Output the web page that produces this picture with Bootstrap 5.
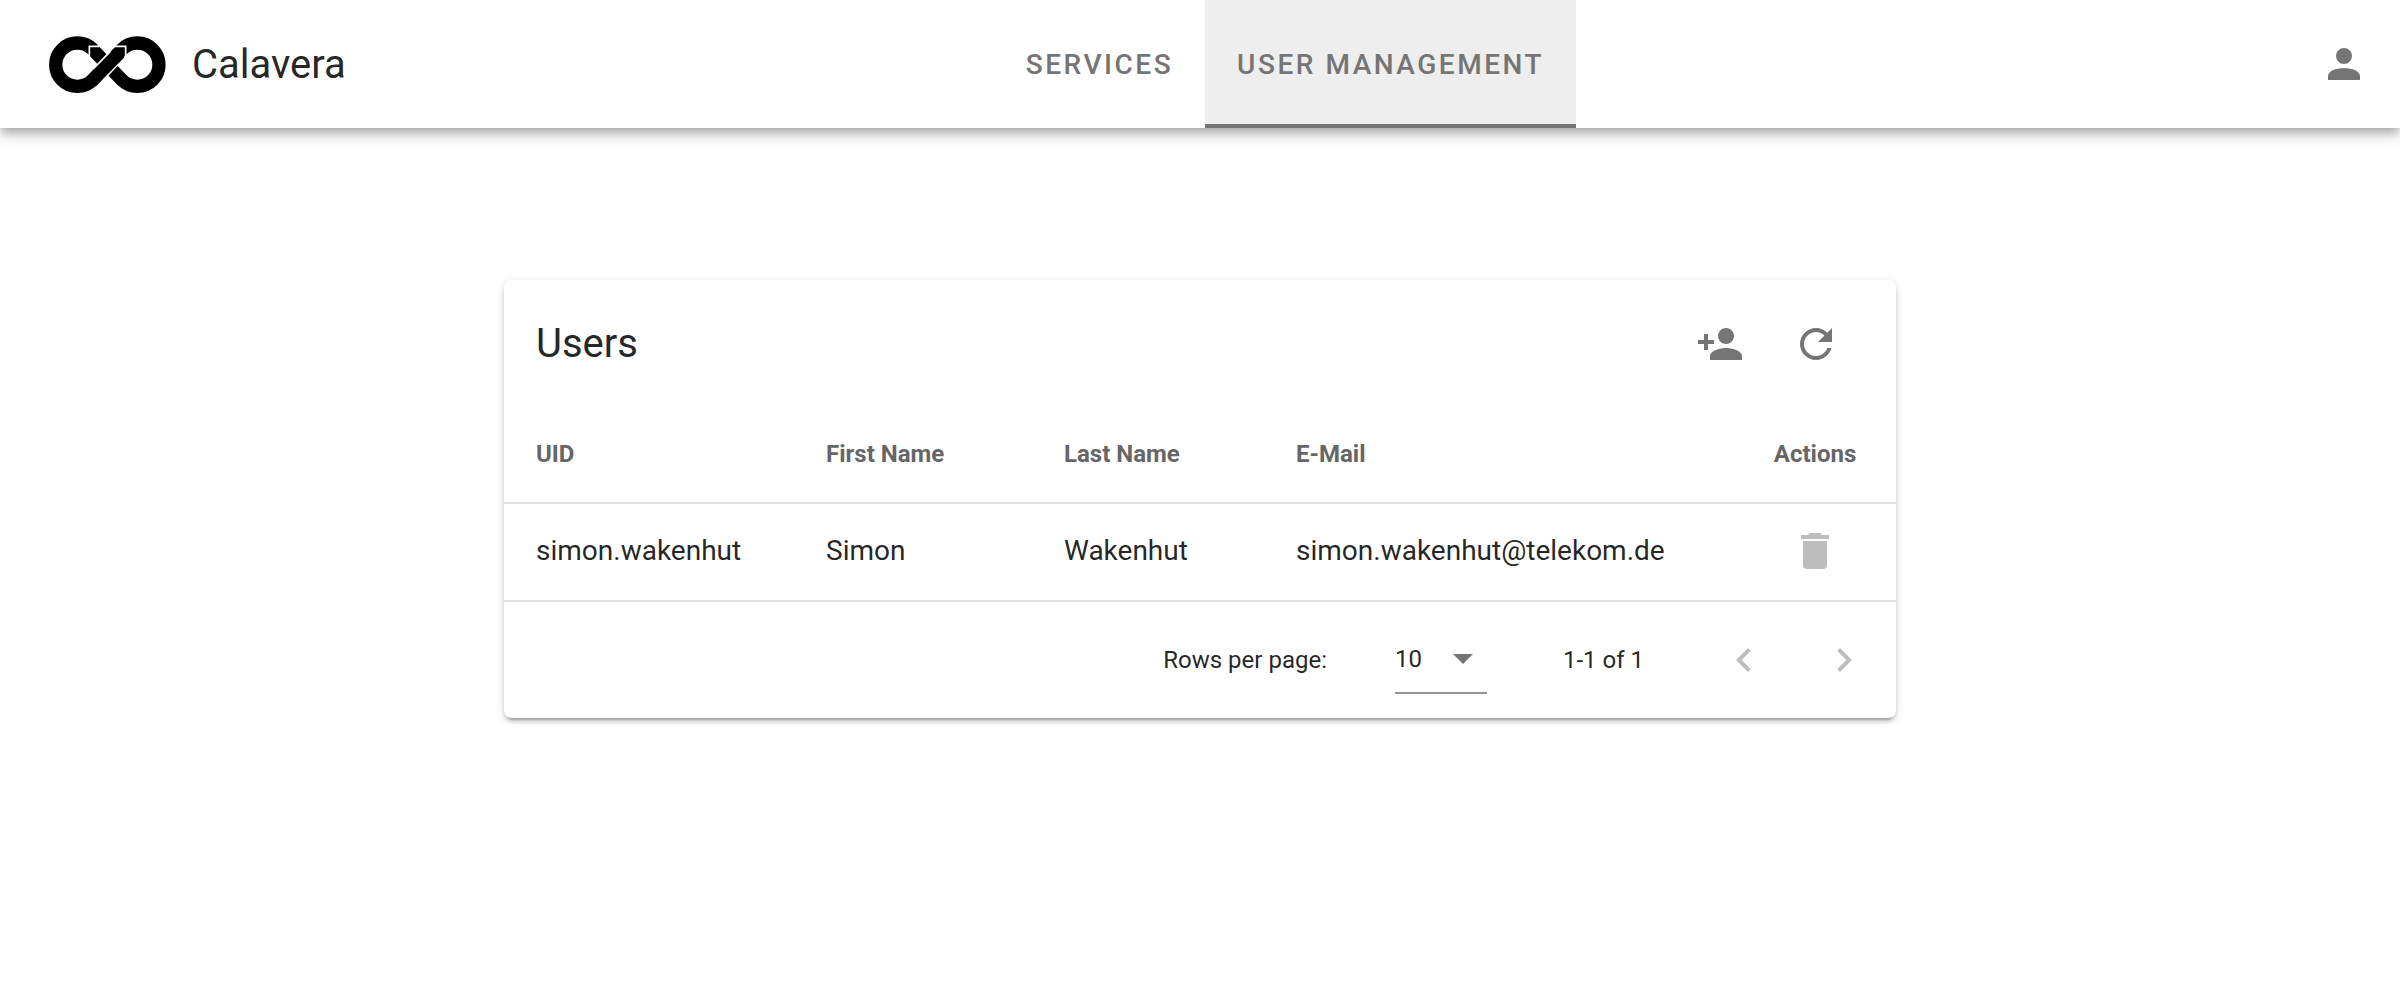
<!DOCTYPE html>
<html lang="en">
<head>
<meta charset="utf-8">
<meta name="viewport" content="width=device-width, initial-scale=1">
<title>Calavera</title>
<link href="https://cdn.jsdelivr.net/npm/bootstrap@5.3.0/dist/css/bootstrap.min.css" rel="stylesheet">
<style>
  body { font-family: Roboto, "Liberation Sans", sans-serif; color: rgba(0,0,0,.87); background: #fff; }
  .top-bar { height: 128px; padding: 0 20px 0 44px; box-shadow: 0 4px 8px -2px rgba(0,0,0,.2), 0 8px 10px rgba(0,0,0,.14), 0 2px 20px rgba(0,0,0,.12); }
  .brand-link { gap: 22px; padding-top: 2px; }
  .brand-name { font-size: 40px; line-height: 60px; color: inherit; }
  .account-area { padding-left: 84px; }
  .tab-link { font-size: 28px; font-weight: 500; letter-spacing: .09em; padding: 2px 32px 0; color: #757575; text-transform: uppercase; border-radius: 0; }
  .tab-link:hover { color: #616161; }
  .tab-link.active { background: #eee; color: #757575; box-shadow: inset 0 -4px #757575; }
  .tool-btn { width: 72px; height: 72px; padding: 0; border: 0; border-radius: 50%; color: #757575; display: inline-flex; align-items: center; justify-content: center; }
  .tool-btn:disabled { color: #bdbdbd; opacity: 1; border: 0; }
  .glyph { width: 48px; height: 48px; fill: currentColor; display: block; }
  .page-area { max-width: 1440px; padding: 152px 24px 24px; }
  .users-card { border: 0; border-radius: 8px; color: inherit; box-shadow: 0 6px 2px -4px rgba(0,0,0,.2), 0 4px 4px rgba(0,0,0,.14), 0 2px 10px rgba(0,0,0,.12); }
  .users-head { height: 128px; padding: 0 44px 0 32px; }
  .users-head h1 { font-size: 40px; font-weight: 400; line-height: 64px; }
  .users-table { --bs-table-color: rgba(0,0,0,.87); table-layout: fixed; border-collapse: separate; border-spacing: 0; }
  .users-table th, .users-table td { padding: 0 32px 2px; vertical-align: middle; border-bottom: 2px solid #e0e0e0; }
  .users-table th { height: 96px; font-size: 24px; font-weight: 700; --bs-table-color: #666; color: #666; }
  .users-table td { height: 98px; font-size: 28px; }
  .w-uid { width: 290px; } .w-first { width: 238px; } .w-last { width: 232px; } .w-act { width: 162px; }
  .pager { height: 116px; padding: 0 16px; font-size: 24px; }
  .rows-select { width: 92px; height: 68px; margin: 0 76px 0 68px; padding: 0; font-size: 24px; color: inherit; border: 0; border-bottom: 2px solid #949494; border-radius: 0; background: no-repeat right 14px center / 20px 10px url("data:image/svg+xml,%3Csvg xmlns='http://www.w3.org/2000/svg' viewBox='0 0 20 10'%3E%3Cpath fill='%23757575' d='M0 0h20L10 10z'/%3E%3C/svg%3E"); }
  .page-btns { gap: 28px; margin-left: 64px; }
</style>
<script src="https://cdn.jsdelivr.net/npm/bootstrap@5.3.0/dist/js/bootstrap.bundle.min.js"></script>
</head>
<body>
<header class="top-bar d-flex align-items-center justify-content-between">
  <a href="#" class="brand-link d-flex align-items-center text-decoration-none text-reset">
    <svg width="126" height="70" viewBox="0 0 378 210" fill="none" aria-hidden="true">
      <path stroke="#000" stroke-width="40" d="M146,150A65,65 0 1 1 146,58L234,150A65,65 0 1 0 234,58L146,150"/>
      <path stroke="#fff" stroke-width="49" d="M164,132L214,80"/>
      <path fill="#000" d="M128,140L212,55H240V83L156,168Z"/>
      <path stroke="#fff" stroke-width="5" d="M166,49H136V84M206,49H245V84"/>
    </svg>
    <span class="brand-name">Calavera</span>
  </a>
  <nav class="nav align-self-stretch" aria-label="Main">
    <a class="nav-link tab-link d-flex align-items-center" href="#">Services</a>
    <a class="nav-link tab-link d-flex align-items-center active" aria-current="page" href="#">User Management</a>
  </nav>
  <div class="account-area">
    <button type="button" class="btn tool-btn" aria-label="Account">
      <svg class="glyph" viewBox="0 0 24 24"><path d="M12,4A4,4 0 0,1 16,8A4,4 0 0,1 12,12A4,4 0 0,1 8,8A4,4 0 0,1 12,4M12,14C16.42,14 20,15.79 20,18V20H4V18C4,15.79 7.58,14 12,14Z"/></svg>
    </button>
  </div>
</header>
<main class="container-fluid page-area">
  <section class="card users-card">
    <div class="users-head d-flex align-items-center justify-content-between">
      <h1 class="mb-0">Users</h1>
      <div class="d-flex gap-4">
        <button type="button" class="btn tool-btn" aria-label="Add user">
          <svg class="glyph" viewBox="0 0 24 24"><path d="M15,14C12.33,14 7,15.33 7,18V20H23V18C23,15.33 17.67,14 15,14M6,10V7H4V10H1V12H4V15H6V12H9V10M15,12A4,4 0 0,0 19,8A4,4 0 0,0 15,4A4,4 0 0,0 11,8A4,4 0 0,0 15,12Z"/></svg>
        </button>
        <button type="button" class="btn tool-btn" aria-label="Refresh">
          <svg class="glyph" viewBox="0 0 24 24"><path d="M17.65,6.35C16.2,4.9 14.21,4 12,4A8,8 0 0,0 4,12A8,8 0 0,0 12,20C15.73,20 18.84,17.45 19.73,14H17.65C16.83,16.33 14.61,18 12,18A6,6 0 0,1 6,12A6,6 0 0,1 12,6C13.66,6 15.14,6.69 16.22,7.78L13,11H20V4L17.65,6.35Z"/></svg>
        </button>
      </div>
    </div>
    <table class="table users-table mb-0">
      <thead>
        <tr><th scope="col" class="w-uid">UID</th><th scope="col" class="w-first">First Name</th><th scope="col" class="w-last">Last Name</th><th scope="col">E-Mail</th><th scope="col" class="w-act text-center">Actions</th></tr>
      </thead>
      <tbody>
        <tr><td>simon.wakenhut</td><td>Simon</td><td>Wakenhut</td><td>simon.wakenhut@telekom.de</td>
          <td class="text-center"><button type="button" class="btn tool-btn" aria-label="Delete user" disabled>
            <svg class="glyph" viewBox="0 0 24 24"><path d="M19,4H15.5L14.5,3H9.5L8.5,4H5V6H19M6,19A2,2 0 0,0 8,21H16A2,2 0 0,0 18,19V7H6V19Z"/></svg>
          </button></td></tr>
      </tbody>
    </table>
    <div class="pager d-flex align-items-center justify-content-end">
      <label for="rows">Rows per page:</label>
      <select id="rows" class="form-select rows-select"><option>10</option><option>25</option><option>50</option></select>
      <span>1-1 of 1</span>
      <div class="page-btns d-flex">
        <button type="button" class="btn tool-btn" aria-label="Previous page" disabled>
          <svg class="glyph" viewBox="0 0 24 24"><path d="M15.41,16.58L10.83,12L15.41,7.41L14,6L8,12L14,18L15.41,16.58Z"/></svg>
        </button>
        <button type="button" class="btn tool-btn" aria-label="Next page" disabled>
          <svg class="glyph" viewBox="0 0 24 24"><path d="M8.59,16.58L13.17,12L8.59,7.41L10,6L16,12L10,18L8.59,16.58Z"/></svg>
        </button>
      </div>
    </div>
  </section>
</main>
</body>
</html>
